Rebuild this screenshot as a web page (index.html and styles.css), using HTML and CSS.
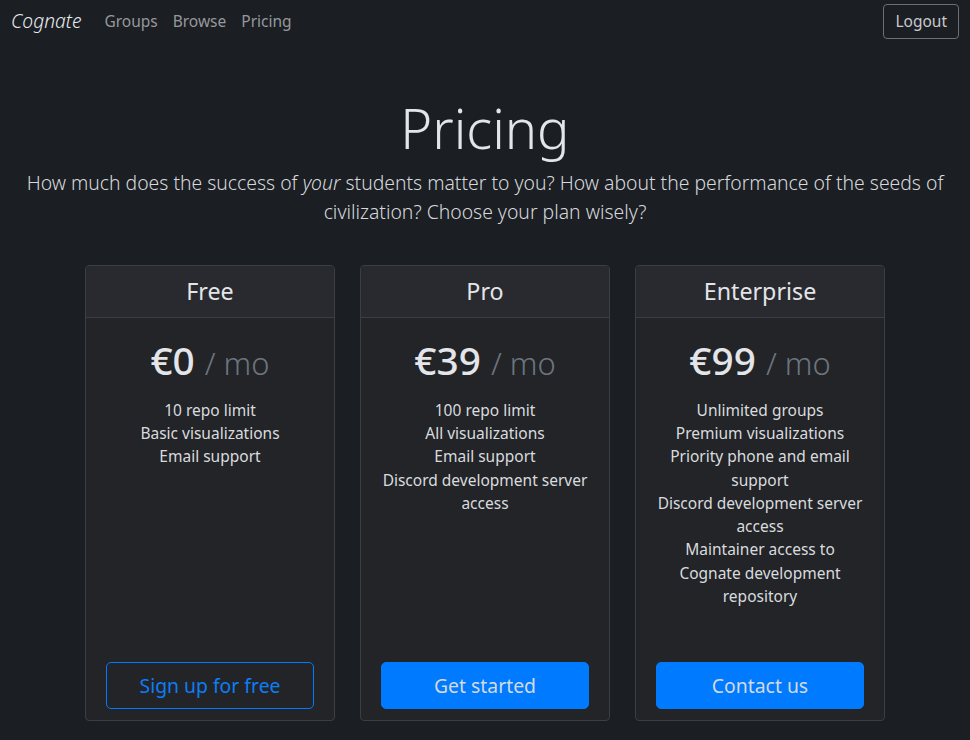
FILE: index.html
```html
<!DOCTYPE html>
<html lang="en">
<head>
<meta charset="utf-8">
<title>Pricing - Cognate</title>
<link rel="stylesheet" href="styles.css">
</head>
<body>
<nav class="navbar">
  <div class="nav-left">
    <a class="brand" href="#">Cognate</a>
    <a class="nav-link" href="#">Groups</a>
    <a class="nav-link" href="#">Browse</a>
    <a class="nav-link" href="#">Pricing</a>
  </div>
  <button class="btn-logout">Logout</button>
</nav>

<header class="hero">
  <h1 class="display">Pricing</h1>
  <p class="lead">How much does the success of <em>your</em> students matter to you? How about the performance of the seeds of civilization? Choose your plan wisely?</p>
</header>

<main class="deck">
  <div class="card">
    <div class="card-header"><h4>Free</h4></div>
    <div class="card-body">
      <h2 class="price">€0 <small>/ mo</small></h2>
      <ul class="features">
        <li>10 repo limit</li>
        <li>Basic visualizations</li>
        <li>Email support</li>
      </ul>
      <button class="btn btn-outline">Sign up for free</button>
    </div>
  </div>
  <div class="card">
    <div class="card-header"><h4>Pro</h4></div>
    <div class="card-body">
      <h2 class="price">€39 <small>/ mo</small></h2>
      <ul class="features">
        <li>100 repo limit</li>
        <li>All visualizations</li>
        <li>Email support</li>
        <li>Discord development server access</li>
      </ul>
      <button class="btn btn-primary">Get started</button>
    </div>
  </div>
  <div class="card">
    <div class="card-header"><h4>Enterprise</h4></div>
    <div class="card-body">
      <h2 class="price">€99 <small>/ mo</small></h2>
      <ul class="features">
        <li>Unlimited groups</li>
        <li>Premium visualizations</li>
        <li>Priority phone and email support</li>
        <li>Discord development server access</li>
        <li>Maintainer access to Cognate development repository</li>
      </ul>
      <button class="btn btn-primary">Contact us</button>
    </div>
  </div>
</main>
</body>
</html>
```

FILE: styles.css
```css
* { box-sizing: border-box; }

html, body {
  margin: 0;
  padding: 0;
}

body {
  background: #1b1e23;
  color: #dee2e6;
  font-family: "Noto Sans", "Open Sans", sans-serif;
  font-size: 15.5px;
  line-height: 1.5;
}

a { text-decoration: none; }

.navbar {
  display: flex;
  align-items: center;
  justify-content: space-between;
  padding: 4px 11px;
}

.nav-left {
  display: flex;
  align-items: center;
}

.brand {
  font-style: italic;
  font-weight: 300;
  font-size: 19.2px;
  color: #e9ecef;
  margin-right: 15.5px;
  line-height: 1.5;
}

.nav-link {
  color: #96989b;
  font-size: 15.5px;
  padding: 0 7.5px;
}

.btn-logout {
  font-family: inherit;
  font-size: 15.5px;
  line-height: 1.5;
  background: transparent;
  color: #c8cacd;
  border: 1px solid #6c7075;
  border-radius: 4px;
  padding: 5px 11px;
}

.hero {
  text-align: center;
  padding: 53px 20px 0;
  max-width: 970px;
  margin: 0 auto;
}

.display {
  font-size: 54.25px;
  font-weight: 300;
  line-height: 1.2;
  margin: 0 0 7px;
  color: #e3e5e8;
}

.lead {
  font-size: 19.375px;
  font-weight: 300;
  line-height: 1.5;
  margin: 0;
  color: #d6d8db;
}

.deck {
  display: grid;
  grid-template-columns: repeat(3, 250px);
  gap: 25px;
  justify-content: center;
  margin-top: 39px;
}

.card {
  display: flex;
  flex-direction: column;
  background: #222428;
  border: 1px solid #3b3e43;
  border-radius: 4px;
  min-height: 456px;
  text-align: center;
}

.card-header {
  background: #282a2f;
  border-bottom: 1px solid #3b3e43;
  padding: 12px 20px 11px;
  border-radius: 3px 3px 0 0;
}

.card-header h4 {
  margin: 0;
  font-size: 23.25px;
  font-weight: 400;
  line-height: 1.2;
  color: #e3e5e8;
}

.card-body {
  flex: 1;
  display: flex;
  flex-direction: column;
  padding: 19px 20px 11px;
}

.price {
  margin: 0 0 15px;
  font-size: 38.75px;
  font-weight: 500;
  line-height: 1.2;
  color: #e3e5e8;
}

.price small {
  font-size: 80%;
  font-weight: 300;
  color: #6c757d;
}

.features {
  list-style: none;
  margin: 0 0 24px;
  padding: 0;
  color: #d9dbde;
}

.btn {
  margin-top: auto;
  width: 100%;
  font-family: inherit;
  font-size: 19.375px;
  line-height: 1.5;
  padding: 8px 16px;
  border-radius: 5px;
  border: 1px solid #007bff;
}

.btn-outline {
  background: transparent;
  color: #0d7df5;
}

.btn-primary {
  background: #007bff;
  color: #d3d9e0;
}
```
